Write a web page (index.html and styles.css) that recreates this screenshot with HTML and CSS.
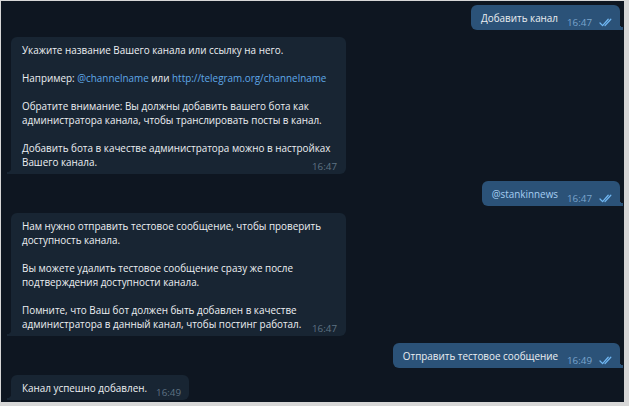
FILE: index.html
```html
<!DOCTYPE html>
<html lang="ru">
<head>
<meta charset="utf-8">
<title>Chat</title>
<link rel="stylesheet" href="styles.css">
</head>
<body>
<div class="chat">
  <div class="msg out">
    <span class="text">Добавить канал</span>
    <span class="meta"><span class="time">16:47</span><svg class="checks" viewBox="0 0 14 9" width="14" height="9"><path d="M1 5 L3.6 7.6 L9.2 1.2 M6 7.6 L11.8 1.2" /></svg></span>
  </div>

  <div class="msg in wide">
    <p>Укажите название Вашего канала или ссылку на него.</p>
    <p>Например: <span class="link">@channelname</span> или <span class="link">http://telegram.org/channelname</span></p>
    <p>Обратите внимание: Вы должны добавить вашего бота как<br>администратора канала, чтобы транслировать посты в канал.</p>
    <div class="last">
      <p>Добавить бота в качестве администратора можно в настройках<br>Вашего канала.</p>
      <span class="time">16:47</span>
    </div>
  </div>

  <div class="msg out">
    <span class="text mention">@stankinnews</span>
    <span class="meta"><span class="time">16:47</span><svg class="checks" viewBox="0 0 14 9" width="14" height="9"><path d="M1 5 L3.6 7.6 L9.2 1.2 M6 7.6 L11.8 1.2" /></svg></span>
  </div>

  <div class="msg in wide">
    <p>Нам нужно отправить тестовое сообщение, чтобы проверить<br>доступность канала.</p>
    <p>Вы можете удалить тестовое сообщение сразу же после<br>подтверждения доступности канала.</p>
    <div class="last">
      <p>Помните, что Ваш бот должен быть добавлен в качестве<br>администратора в данный канал, чтобы постинг работал.</p>
      <span class="time">16:47</span>
    </div>
  </div>

  <div class="msg out">
    <span class="text">Отправить тестовое сообщение</span>
    <span class="meta"><span class="time">16:49</span><svg class="checks" viewBox="0 0 14 9" width="14" height="9"><path d="M1 5 L3.6 7.6 L9.2 1.2 M6 7.6 L11.8 1.2" /></svg></span>
  </div>

  <div class="msg in single">
    <span class="text">Канал успешно добавлен.</span>
    <span class="time">16:49</span>
  </div>
</div>
</body>
</html>
```

FILE: styles.css
```css
html, body {
  margin: 0;
  padding: 0;
}

body {
  background: #d7d7d7;
  font-family: "Open Sans", "Noto Sans", "DejaVu Sans", sans-serif;
  font-size: 9.9px;
  line-height: 14px;
  color: #eceff2;
}

.chat {
  box-sizing: border-box;
  width: 623px;
  height: 401px;
  margin: 1px 5px 4px 1px;
  background: #0e1621;
  padding: 4px 4px 0 10px;
  display: flex;
  flex-direction: column;
  align-items: flex-start;
  gap: 7px;
  overflow: hidden;
}

.msg {
  position: relative;
  box-sizing: border-box;
  border-radius: 6px;
  padding: 6px 9px 5px 11px;
}

.msg p {
  margin: 0;
  white-space: nowrap;
}

.msg p + p,
.msg p + .last {
  margin-top: 14px;
}

.in {
  background: #182533;
  border-bottom-left-radius: 0;
}

.in::before {
  content: "";
  position: absolute;
  left: -4px;
  bottom: 0;
  width: 4px;
  height: 6px;
  background: radial-gradient(circle at 0 0, transparent 4px, #182533 4.5px);
}

.out {
  align-self: flex-end;
  background: #2b5278;
  display: flex;
  align-items: flex-end;
  padding: 6px 7px 5px 10px;
  border-bottom-right-radius: 0;
}

.out::after {
  content: "";
  position: absolute;
  right: -3px;
  bottom: 0;
  width: 3px;
  height: 6px;
  background: radial-gradient(circle at 100% 0, transparent 3px, #2b5278 3.5px);
}

.wide {
  width: 335px;
}

.single {
  display: flex;
  align-items: flex-end;
  padding-right: 8px;
}

.last {
  display: grid;
  grid-template-columns: 1fr;
}

.last > * {
  grid-area: 1 / 1;
}

.last .time {
  justify-self: end;
  align-self: end;
}

.text {
  white-space: nowrap;
}

.link {
  color: #5fa8e8;
}

.mention {
  color: #a5cdf1;
}

.time {
  font-size: 9.8px;
  line-height: 10px;
  color: #5f7384;
  margin-bottom: -3px;
  white-space: nowrap;
}

.single .time {
  margin-left: 9px;
}

.meta {
  display: flex;
  align-items: flex-end;
  margin-left: 9px;
}

.out .time {
  color: #7aa4cc;
}

.checks {
  margin-left: 7px;
  margin-bottom: -2px;
  fill: none;
  stroke: #6fb6f2;
  stroke-width: 1.3;
  stroke-linecap: round;
  stroke-linejoin: round;
}
```
